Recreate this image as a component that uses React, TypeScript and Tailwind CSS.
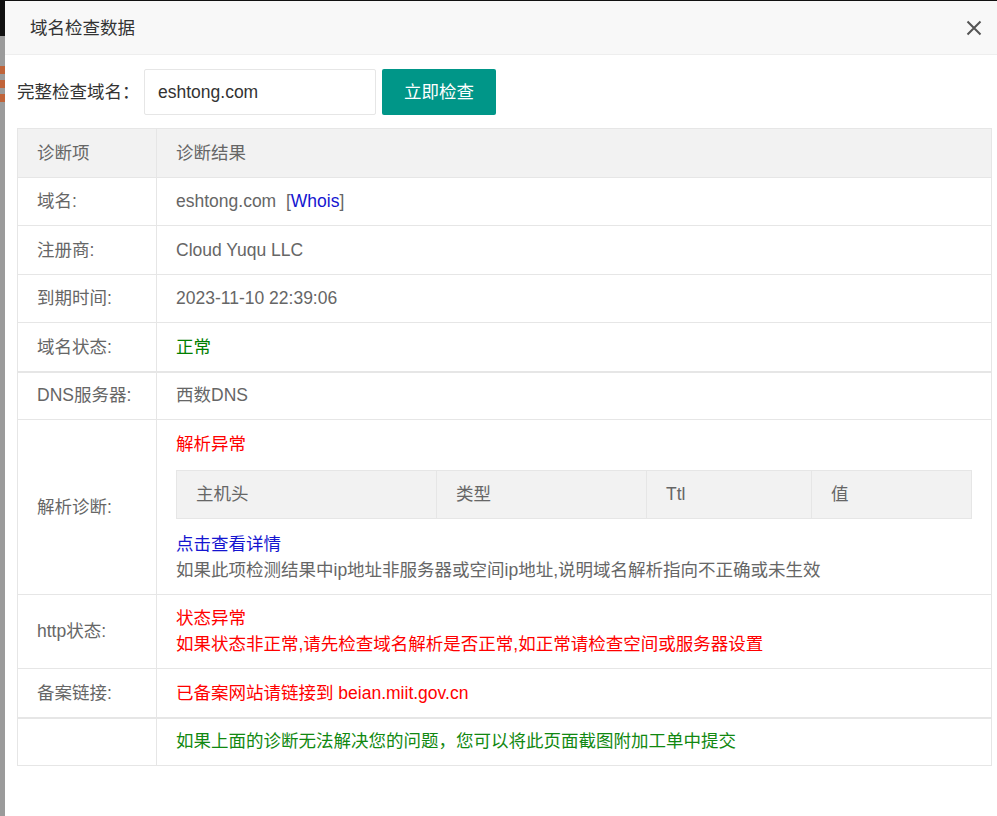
import type { ReactNode } from "react";

const FONT = { fontFamily: '"Liberation Sans", "Noto Sans CJK SC", sans-serif' };

interface RowProps {
  label: string;
  children?: ReactNode;
  thickTop?: boolean;
  header?: boolean;
}

function Row({ label, children, thickTop, header }: RowProps) {
  return (
    <div
      className={[
        "flex border-b border-[#e6e6e6]",
        thickTop ? "shadow-[inset_0_1px_0_#e6e6e6]" : "",
        header ? "bg-[#f2f2f2]" : "",
      ].join(" ")}
    >
      <div className="flex w-[139px] shrink-0 items-center border-r border-[#e6e6e6] px-[19px] py-[10.75px] text-[#666]">
        {label}
      </div>
      <div className="flex-1 px-[19px] py-[10.75px] text-[#666]">{children}</div>
    </div>
  );
}

export default function App() {
  return (
    <div
      className="relative flex h-[816px] w-[997px] overflow-hidden bg-white text-[17.5px] leading-[26px]"
      style={FONT}
    >
      <div className="absolute left-0 top-0 z-10 h-px w-full bg-[#111]" />

      {/* page behind the layer */}
      <div className="flex w-[5px] shrink-0 flex-col bg-[#9b9b9b]">
        <div className="h-[36px] bg-[#111]" />
        <div className="mt-[30px] h-[8px] bg-[#c0643a]" />
        <div className="mt-[6px] h-[8px] bg-[#c0643a]" />
        <div className="mt-[6px] h-[8px] bg-[#c0643a]" />
      </div>

      <div className="flex flex-1 flex-col bg-white pt-px">
        <div className="flex h-[54px] items-center justify-between border-b border-[#eee] bg-[#f8f8f8] pl-[25px] pr-[14px]">
          <span className="text-[17.5px] text-[#333]">域名检查数据</span>
          <svg width="16" height="16" viewBox="0 0 16 16" className="mr-[1px]" aria-hidden>
            <path d="M1.5 1.5 L14.5 14.5 M14.5 1.5 L1.5 14.5" stroke="#555" strokeWidth="2" />
          </svg>
        </div>

        <div className="flex items-center pl-[12px] pt-[14px]">
          <span className="w-[127px] text-[#333]">完整检查域名：</span>
          <div className="flex h-[46px] w-[232px] items-center rounded-[2px] border border-[#e6e6e6] pl-[13px] text-[#333]">
            eshtong.com
          </div>
          <button
            type="button"
            className="ml-[6px] flex h-[46px] w-[114px] items-center justify-center rounded-[2px] bg-[#009688] text-white"
          >
            立即检查
          </button>
        </div>

        <div className="ml-[12px] mt-[13px] w-[975px] border-x border-t border-[#e6e6e6]">
          <Row label="诊断项" header>
            诊断结果
          </Row>
          <Row label="域名:">
            eshtong.com&nbsp;&nbsp;[<span className="text-[#1515d0]">Whois</span>]
          </Row>
          <Row label="注册商:">Cloud Yuqu LLC</Row>
          <Row label="到期时间:">2023-11-10 22:39:06</Row>
          <Row label="域名状态:">
            <span className="text-[#008000]">正常</span>
          </Row>
          <Row label="DNS服务器:" thickTop>
            西数DNS
          </Row>
          <Row label="解析诊断:">
            <div className="text-[#ff0000]">解析异常</div>
            <div className="mb-[12px] mt-[13px] flex h-[49px] border border-[#e6e6e6] bg-[#f2f2f2] text-[#666]">
              <div className="flex w-[260px] items-center border-r border-[#e6e6e6] pl-[19px]">主机头</div>
              <div className="flex w-[210px] items-center border-r border-[#e6e6e6] pl-[19px]">类型</div>
              <div className="flex w-[165px] items-center border-r border-[#e6e6e6] pl-[19px]">Ttl</div>
              <div className="flex flex-1 items-center pl-[19px]">值</div>
            </div>
            <div className="text-[#1515d0]">点击查看详情</div>
            <div>如果此项检测结果中ip地址非服务器或空间ip地址,说明域名解析指向不正确或未生效</div>
          </Row>
          <Row label="http状态:">
            <div className="text-[#ff0000]">状态异常</div>
            <div className="text-[#ff0000]">如果状态非正常,请先检查域名解析是否正常,如正常请检查空间或服务器设置</div>
          </Row>
          <Row label="备案链接:">
            <span className="text-[#ff0000]">已备案网站请链接到 beian.miit.gov.cn</span>
          </Row>
          <Row label="" thickTop>
            <span className="text-[#118811]">如果上面的诊断无法解决您的问题，您可以将此页面截图附加工单中提交</span>
          </Row>
        </div>
      </div>
    </div>
  );
}
